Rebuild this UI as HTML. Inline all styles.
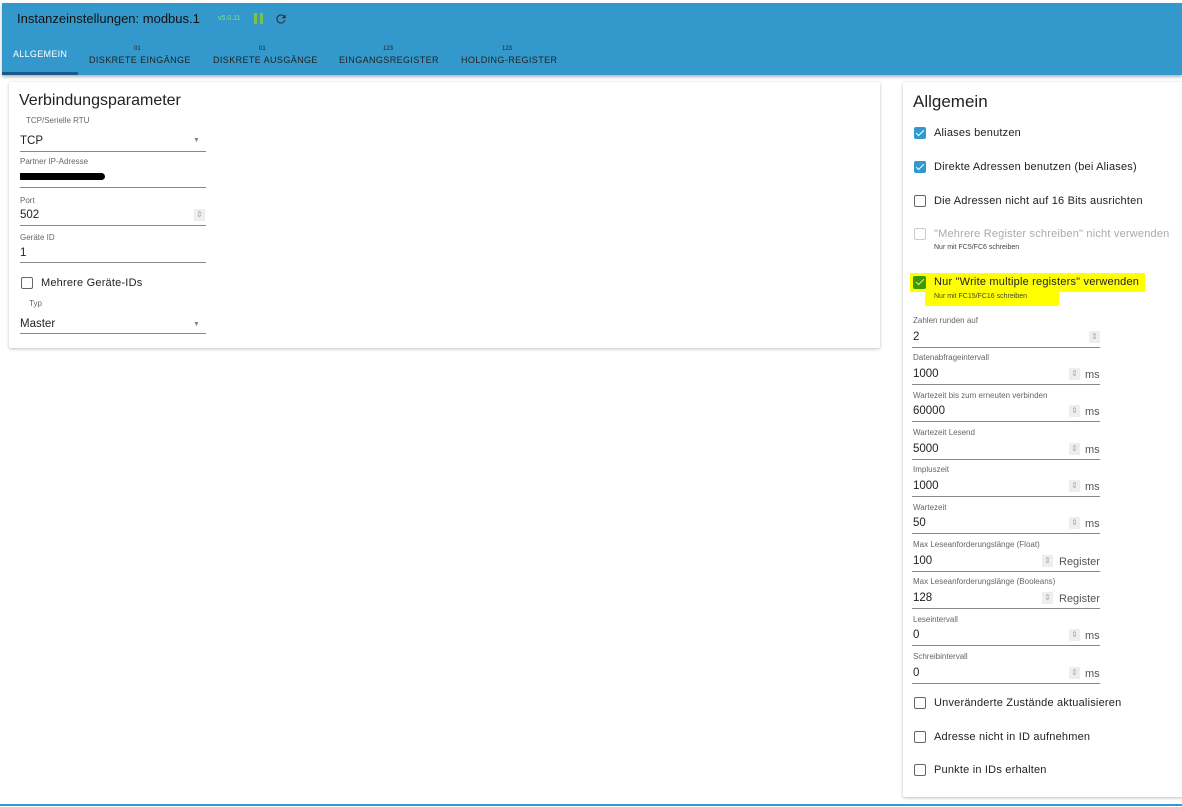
<!DOCTYPE html>
<html><head><meta charset="utf-8"><style>
*{box-sizing:border-box;margin:0;padding:0}
body{width:1182px;height:807px;background:#fff;font-family:"Liberation Sans",sans-serif;color:#222;position:relative;overflow:hidden}
.a{position:absolute;white-space:nowrap}
.lbl{font-size:8px;color:#666}
.val{font-size:11.5px;color:#222}
.u{font-size:11px;color:#555}
.ln{position:absolute;height:1px;background:#888}
.sp{position:absolute;width:11px;height:12px;background:#eee;color:#aaa;font-size:8px;text-align:center;line-height:12px}
.cb{position:absolute;width:12px;height:12px;border:1.5px solid #666;border-radius:2px;background:#fff}
.cbc{border:none;background:#3399cc}
.cbc:after{content:"";position:absolute;left:3.5px;top:1px;width:3px;height:7px;border:solid #fff;border-width:0 1.5px 1.5px 0;transform:rotate(45deg)}
.ct{font-size:11px;color:#222;letter-spacing:.2px}
.card{position:absolute;background:#fff;box-shadow:0 1px 3px rgba(0,0,0,.25);border-radius:2px}
</style></head><body>
<div class="a" style="left:2px;top:3px;width:1180px;height:72px;background:#3399cc;box-shadow:0 2px 3px rgba(0,0,0,.3)"></div>
<div class="a" style="left:17px;top:11px;font-size:13px;color:#111">Instanzeinstellungen: modbus.1</div>
<div class="a" style="left:218px;top:15px;font-size:7px;color:#7fe07f">v5.0.11</div>
<div class="a" style="left:254px;top:13px;width:3px;height:11px;background:#7cc24a"></div>
<div class="a" style="left:260px;top:13px;width:3px;height:11px;background:#7cc24a"></div>
<svg class="a" style="left:274px;top:12px" width="14" height="14" viewBox="0 0 24 24"><path d="M17.65 6.35A7.950 7.95 0 0 0 12 4a8 8 0 1 0 7.73 10h-2.08A6 6 0 1 1 12 6c1.66 0 3.14.69 4.22 1.78L13 11h7V4l-2.35 2.35z" fill="#333"/></svg>
<div class="a" style="left:13px;top:49px;font-size:9px;color:#fff;letter-spacing:.3px">ALLGEMEIN</div>
<div class="a" style="left:2px;top:72px;width:76px;height:3px;background:#1a5a8a"></div>
<div class="a" style="left:134px;top:46px;font-size:6px;color:#222">01</div>
<div class="a" style="left:89px;top:55px;font-size:9px;color:#222;letter-spacing:.4px">DISKRETE EINGÄNGE</div>
<div class="a" style="left:259px;top:46px;font-size:6px;color:#222">01</div>
<div class="a" style="left:213px;top:55px;font-size:9px;color:#222;letter-spacing:.4px">DISKRETE AUSGÄNGE</div>
<div class="a" style="left:383px;top:46px;font-size:6px;color:#222">123</div>
<div class="a" style="left:339px;top:55px;font-size:9px;color:#222;letter-spacing:.4px">EINGANGSREGISTER</div>
<div class="a" style="left:502px;top:46px;font-size:6px;color:#222">123</div>
<div class="a" style="left:461px;top:55px;font-size:9px;color:#222;letter-spacing:.4px">HOLDING-REGISTER</div>

<div class="card" style="left:9px;top:82px;width:871px;height:266px"></div>
<div class="a" style="left:19px;top:92px;font-size:16px;color:#222">Verbindungsparameter</div>
<div class="a lbl" style="left:26px;top:116px">TCP/Serielle RTU</div>
<div class="a val" style="left:20px;top:135px">TCP</div>
<div class="a" style="left:193px;top:137px;font-size:7px;color:#888">▼</div>
<div class="ln" style="left:20px;top:151px;width:186px"></div>
<div class="a lbl" style="left:20px;top:157px">Partner IP-Adresse</div>
<div class="a" style="left:20px;top:173px;width:85px;height:7px;background:#000;border-radius:4px 20px 20px 4px"></div>
<div class="ln" style="left:20px;top:187px;width:186px"></div>
<div class="a lbl" style="left:20px;top:196px">Port</div>
<div class="a val" style="left:20px;top:209px">502</div>
<div class="sp" style="left:194px;top:209px">⇕</div>
<div class="ln" style="left:20px;top:225px;width:186px"></div>
<div class="a lbl" style="left:20px;top:233px">Geräte ID</div>
<div class="a val" style="left:20px;top:247px">1</div>
<div class="ln" style="left:20px;top:262px;width:186px"></div>
<div class="cb" style="left:21px;top:277px"></div>
<div class="a ct" style="left:41px;top:277px">Mehrere Geräte-IDs</div>
<div class="a lbl" style="left:29px;top:299px">Typ</div>
<div class="a val" style="left:20px;top:318px">Master</div>
<div class="a" style="left:193px;top:321px;font-size:7px;color:#888">▼</div>
<div class="ln" style="left:20px;top:333px;width:186px"></div>

<div class="card" style="left:903px;top:82px;width:285px;height:715px"></div>
<div class="a" style="left:913px;top:92px;font-size:17px;color:#222">Allgemein</div>
<div class="cb cbc" style="left:914px;top:127px"></div><div class="a ct" style="left:934px;top:127px">Aliases benutzen</div>
<div class="cb cbc" style="left:914px;top:161px"></div><div class="a ct" style="left:934px;top:161px">Direkte Adressen benutzen (bei Aliases)</div>
<div class="cb" style="left:914px;top:195px"></div><div class="a ct" style="left:934px;top:195px">Die Adressen nicht auf 16 Bits ausrichten</div>
<div class="cb" style="left:914px;top:228px;border-color:#ccc"></div><div class="a ct" style="left:934px;top:228px;color:#aaa">"Mehrere Register schreiben" nicht verwenden</div>
<div class="a" style="left:934px;top:244px;font-size:7px;color:#444">Nur mit FC5/FC6 schreiben</div>
<div class="a" style="left:910px;top:273px;width:235px;height:19px;background:#ffff00"></div>
<div class="a" style="left:925px;top:290px;width:134px;height:16px;background:#ffff00"></div>
<div class="a" style="left:913px;top:276px;width:13px;height:13px;background:#3a9a00;border-radius:2px"></div>
<div class="a" style="left:918px;top:277px;width:4px;height:8px;border:solid #ddf0aa;border-width:0 1.5px 1.5px 0;transform:rotate(45deg)"></div>
<div class="a ct" style="left:934px;top:276px">Nur "Write multiple registers" verwenden</div>
<div class="a" style="left:934px;top:293px;font-size:7px;color:#444">Nur mit FC15/FC16 schreiben</div>

<div class="a lbl" style="left:913px;top:316px">Zahlen runden auf</div><div class="a val" style="left:913px;top:331px">2</div><div class="sp" style="left:1089px;top:331px">⇕</div><div class="ln" style="left:912px;top:347px;width:188px"></div>
<div class="a lbl" style="left:913px;top:353px">Datenabfrageintervall</div><div class="a val" style="left:913px;top:368px">1000</div><div class="sp" style="left:1069px;top:368px">⇕</div><div class="a u" style="left:1085px;top:369px">ms</div><div class="ln" style="left:912px;top:384px;width:188px"></div>
<div class="a lbl" style="left:913px;top:391px">Wartezeit bis zum erneuten verbinden</div><div class="a val" style="left:913px;top:405px">60000</div><div class="sp" style="left:1069px;top:405px">⇕</div><div class="a u" style="left:1085px;top:406px">ms</div><div class="ln" style="left:912px;top:421px;width:188px"></div>
<div class="a lbl" style="left:913px;top:428px">Wartezeit Lesend</div><div class="a val" style="left:913px;top:443px">5000</div><div class="sp" style="left:1069px;top:443px">⇕</div><div class="a u" style="left:1085px;top:444px">ms</div><div class="ln" style="left:912px;top:459px;width:188px"></div>
<div class="a lbl" style="left:913px;top:465px">Impluszeit</div><div class="a val" style="left:913px;top:480px">1000</div><div class="sp" style="left:1069px;top:480px">⇕</div><div class="a u" style="left:1085px;top:481px">ms</div><div class="ln" style="left:912px;top:496px;width:188px"></div>
<div class="a lbl" style="left:913px;top:503px">Wartezeit</div><div class="a val" style="left:913px;top:517px">50</div><div class="sp" style="left:1069px;top:517px">⇕</div><div class="a u" style="left:1085px;top:518px">ms</div><div class="ln" style="left:912px;top:533px;width:188px"></div>
<div class="a lbl" style="left:913px;top:540px">Max Leseanforderungslänge (Float)</div><div class="a val" style="left:913px;top:555px">100</div><div class="sp" style="left:1042px;top:555px">⇕</div><div class="a u" style="left:1059px;top:556px">Register</div><div class="ln" style="left:912px;top:571px;width:188px"></div>
<div class="a lbl" style="left:913px;top:577px">Max Leseanforderungslänge (Booleans)</div><div class="a val" style="left:913px;top:592px">128</div><div class="sp" style="left:1042px;top:592px">⇕</div><div class="a u" style="left:1059px;top:593px">Register</div><div class="ln" style="left:912px;top:608px;width:188px"></div>
<div class="a lbl" style="left:913px;top:615px">Leseintervall</div><div class="a val" style="left:913px;top:629px">0</div><div class="sp" style="left:1069px;top:629px">⇕</div><div class="a u" style="left:1085px;top:630px">ms</div><div class="ln" style="left:912px;top:645px;width:188px"></div>
<div class="a lbl" style="left:913px;top:652px">Schreibintervall</div><div class="a val" style="left:913px;top:667px">0</div><div class="sp" style="left:1069px;top:667px">⇕</div><div class="a u" style="left:1085px;top:668px">ms</div><div class="ln" style="left:912px;top:683px;width:188px"></div>

<div class="cb" style="left:914px;top:697px"></div><div class="a ct" style="left:934px;top:697px">Unveränderte Zustände aktualisieren</div>
<div class="cb" style="left:914px;top:731px"></div><div class="a ct" style="left:934px;top:731px">Adresse nicht in ID aufnehmen</div>
<div class="cb" style="left:914px;top:764px"></div><div class="a ct" style="left:934px;top:764px">Punkte in IDs erhalten</div>

<div class="a" style="left:0;top:804px;width:1182px;height:2px;background:#3399cc"></div>
</body></html>
